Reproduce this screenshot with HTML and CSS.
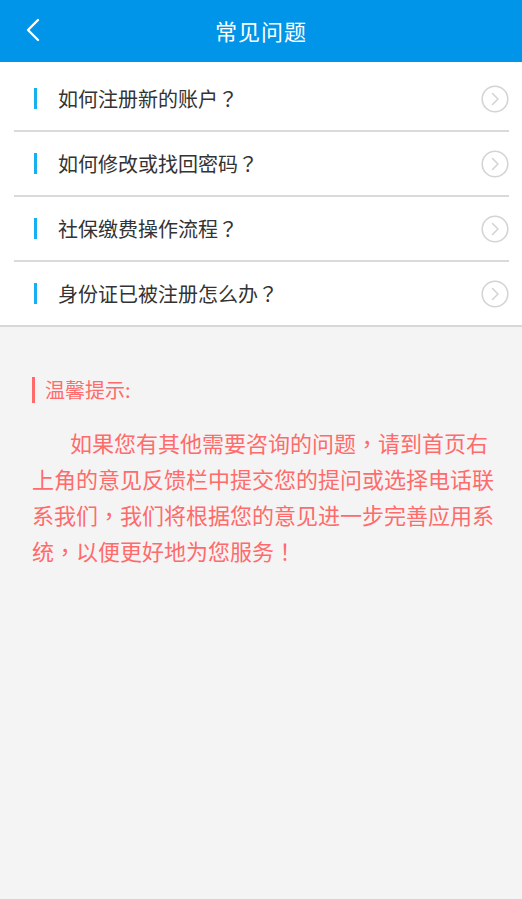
FILE: index.html
```html
<!DOCTYPE html>
<html lang="zh-CN">
<head>
  <meta charset="UTF-8">
  <meta name="viewport" content="width=device-width, initial-scale=1.0">
  <title>常见问题</title>
  <link rel="stylesheet" href="styles.css">
</head>
<body>

  <!-- 顶部标题栏 -->
  <div class="header">
    <a class="back" href="#">
      <svg width="14" height="24" viewBox="0 0 14 24">
        <polyline points="12,2 2,12 12,22" fill="none" stroke="#fff" stroke-width="2.4" stroke-linecap="round" stroke-linejoin="round"/>
      </svg>
    </a>
    <h1>常见问题</h1>
  </div>

  <!-- 问题列表 -->
  <ul class="faq-list">
    <li class="faq-item">
      <span class="mark"></span>
      <span class="question">如何注册新的账户<span class="punc" lang="zh-TW">？</span></span>
      <svg class="arrow" width="28" height="28" viewBox="0 0 28 28">
        <circle cx="14" cy="14" r="12.8" fill="none" stroke="#d4d4d4" stroke-width="1.6"/>
        <polyline points="11.5,8.5 17,14 11.5,19.5" fill="none" stroke="#d4d4d4" stroke-width="1.6" stroke-linecap="round" stroke-linejoin="round"/>
      </svg>
    </li>
    <li class="faq-item">
      <span class="mark"></span>
      <span class="question">如何修改或找回密码<span class="punc" lang="zh-TW">？</span></span>
      <svg class="arrow" width="28" height="28" viewBox="0 0 28 28">
        <circle cx="14" cy="14" r="12.8" fill="none" stroke="#d4d4d4" stroke-width="1.6"/>
        <polyline points="11.5,8.5 17,14 11.5,19.5" fill="none" stroke="#d4d4d4" stroke-width="1.6" stroke-linecap="round" stroke-linejoin="round"/>
      </svg>
    </li>
    <li class="faq-item">
      <span class="mark"></span>
      <span class="question">社保缴费操作流程<span class="punc" lang="zh-TW">？</span></span>
      <svg class="arrow" width="28" height="28" viewBox="0 0 28 28">
        <circle cx="14" cy="14" r="12.8" fill="none" stroke="#d4d4d4" stroke-width="1.6"/>
        <polyline points="11.5,8.5 17,14 11.5,19.5" fill="none" stroke="#d4d4d4" stroke-width="1.6" stroke-linecap="round" stroke-linejoin="round"/>
      </svg>
    </li>
    <li class="faq-item">
      <span class="mark"></span>
      <span class="question">身份证已被注册怎么办<span class="punc" lang="zh-TW">？</span></span>
      <svg class="arrow" width="28" height="28" viewBox="0 0 28 28">
        <circle cx="14" cy="14" r="12.8" fill="none" stroke="#d4d4d4" stroke-width="1.6"/>
        <polyline points="11.5,8.5 17,14 11.5,19.5" fill="none" stroke="#d4d4d4" stroke-width="1.6" stroke-linecap="round" stroke-linejoin="round"/>
      </svg>
    </li>
  </ul>

  <!-- 温馨提示 -->
  <div class="tips">
    <div class="tips-title">温馨提示:</div>
    <p class="tips-text">如果您有其他需要咨询的问题<span class="punc" lang="zh-TW">，</span>请到首页右上角的意见反馈栏中提交您的提问或选择电话联系我们<span class="punc" lang="zh-TW">，</span>我们将根据您的意见进一步完善应用系统<span class="punc" lang="zh-TW">，</span>以便更好地为您服务<span class="punc" lang="zh-TW">！</span></p>
  </div>

</body>
</html>
```

FILE: styles.css
```css
body {
  font-family: "Noto Sans CJK SC", "Noto Sans", sans-serif;
  background-color: #f4f4f4;
  margin: 0;
  padding: 0;
  min-height: 100vh;
  text-spacing-trim: space-all;
}


/* 全角标点居中显示 */
.punc {
  font-family: "Noto Sans CJK TC", "Noto Sans CJK SC", sans-serif;
}


.header {
  height: 62px;
  background-color: #0095e9;
  display: flex;
  align-items: center;
  justify-content: center;
  position: relative;
}


.header h1 {
  margin: 0;
  color: #fff;
  font-size: 22px;
  font-weight: normal;
  line-height: 62px;
  position: relative;
  top: -1px;
  letter-spacing: 1px;
}


.header .back {
  position: absolute;
  left: 26px;
  top: 18px;
  display: block;
  width: 14px;
  height: 24px;
}


.faq-list {
  list-style: none;
  margin: 0;
  padding: 5px 0 0;
  background-color: #fff;
  border-bottom: 2px solid #d8d8d8;
}


.faq-item {
  height: 63px;
  margin: 0 13px 0 14px;
  padding-left: 20px;
  display: flex;
  align-items: center;
  border-bottom: 2px solid #dadada;
}


.faq-item:last-child {
  border-bottom: none;
}


.faq-item .mark {
  width: 3px;
  height: 21px;
  background-color: #16b0f2;
  margin-right: 21px;
}


.faq-item .question {
  flex: 1;
  font-size: 20px;
  color: #333;
}


.faq-item .arrow {
  display: block;
}


.tips {
  padding: 50px 20px 0 32px;
}


.tips-title {
  border-left: 3px solid #ff6b6b;
  padding-left: 10px;
  height: 26px;
  line-height: 26px;
  font-size: 20px;
  color: #ff6b6b;
}


.tips-text {
  margin: 21px 0 0;
  font-size: 22px;
  line-height: 36px;
  text-indent: 38px;
  color: #ff6b6b;
}
```
